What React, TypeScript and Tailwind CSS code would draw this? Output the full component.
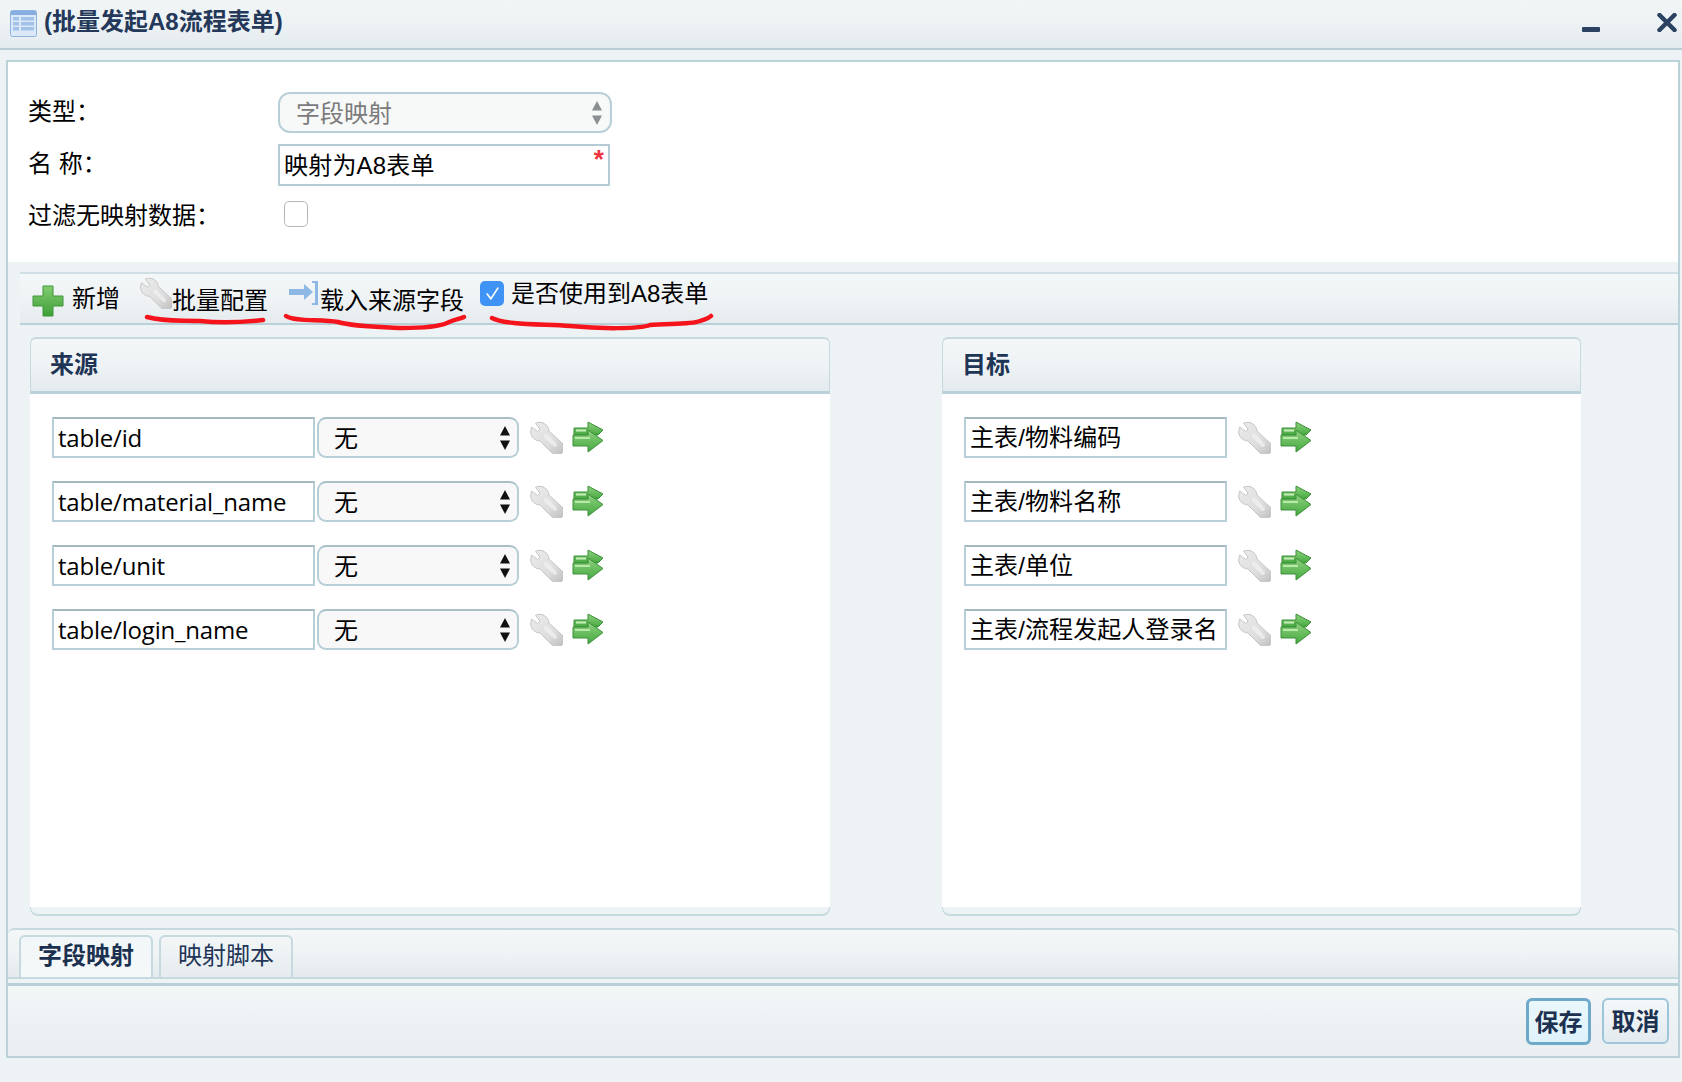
import React from "react";

const FONT = "[font-family:'Liberation_Sans','Noto_Sans_CJK_SC',sans-serif]";

function Wrench({ className = "" }: { className?: string }) {
  return (
    <svg viewBox="0 0 33 33" className={`blur-[0.5px] ${className}`}>
      <defs>
        <linearGradient id="wr" x1="0" y1="0" x2="1" y2="1">
          <stop offset="0" stopColor="#ebebeb" />
          <stop offset="0.6" stopColor="#dedede" />
          <stop offset="1" stopColor="#bdbdbd" />
        </linearGradient>
      </defs>
      <path
        d="M5.5 2.2 A9.5 9.5 0 0 1 19 10 L32 22 A7 7 0 0 1 22 32 L10 20 A9.5 9.5 0 0 1 1.8 6 L7.5 10.5 L10 8 Z"
        fill="url(#wr)"
        stroke="#c4c4c4"
        strokeWidth="1"
        strokeLinejoin="round"
      />
      <path d="M16 15 L25 24" stroke="#f2f2f2" strokeWidth="4" strokeLinecap="round" opacity=".7" />
    </svg>
  );
}

function ArrowPair({ className = "" }: { className?: string }) {
  return (
    <svg viewBox="0 0 32 32" className={`blur-[0.3px] ${className}`}>
      <defs>
        <linearGradient id="ag" x1="0" y1="0" x2="0" y2="1">
          <stop offset="0" stopColor="#8fd27e" />
          <stop offset="1" stopColor="#45a840" />
        </linearGradient>
      </defs>
      <path
        d="M2 7 H16 V1 L31 9 L26 14 H10 V14 H2 Z"
        fill="url(#ag)"
        stroke="#3d8f3a"
        strokeWidth="1"
        strokeLinejoin="round"
      />
      <path d="M4 9.5 H14" stroke="#c8eebc" strokeWidth="2" />
      <path
        d="M1 14 H16 V9 L31 19.5 L16 31 V25 H1 Z"
        fill="url(#ag)"
        stroke="#3d8f3a"
        strokeWidth="1"
        strokeLinejoin="round"
      />
      <path d="M3 17 H18" stroke="#b9e8ac" strokeWidth="2" />
    </svg>
  );
}

function SelectArrows({ tone }: { tone: string }) {
  return (
    <svg viewBox="0 0 10 24" className="h-[24px] w-[10px]" fill={tone}>
      <path d="M5 0 L10 9.5 H0 Z" />
      <path d="M5 24 L10 14.5 H0 Z" />
    </svg>
  );
}

function Row({ text, select }: { text: string; select: boolean }) {
  return (
    <div className="flex h-[41px] items-start">
      <div
        className={`flex h-[41px] w-[263px] items-center whitespace-nowrap border-2 border-[#b9cfd7] border-t-[#a3bac3] bg-white pl-[4px] text-[24px] leading-none text-black ${
          select ? "tracking-[-0.2px] [font-family:'Open_Sans','Noto_Sans_CJK_SC',sans-serif]" : "tracking-[0.1px]"
        }`}
      >
        {text}
      </div>
      {select && (
        <div className="ml-[2px] flex h-[41px] w-[202px] items-center justify-between rounded-[9px] border-2 border-[#b9cfd7] border-t-[#a9bfc8] bg-[#f8f8f8] pl-[15px] pr-[7px] text-[24px] leading-none text-black">
          <span className="pt-[2px]">无</span>
          <SelectArrows tone="#111111" />
        </div>
      )}
      <Wrench className="ml-[11px] mt-[4px] h-[33px] w-[33px]" />
      <ArrowPair className="ml-[9px] mt-[4px] h-[32px] w-[32px]" />
    </div>
  );
}

function Panel({
  title,
  width,
  rows,
  select,
}: {
  title: string;
  width: string;
  rows: string[];
  select: boolean;
}) {
  return (
    <section className={`flex flex-col ${width}`}>
      <header className="flex h-[57px] items-center rounded-t-[6px] border-x border-b-[3px] border-t-2 border-[#c5d9df] border-b-[#bad1d9] bg-gradient-to-b from-[#f3f7f7] via-[#eff3f5] to-[#e3eaed] pl-[19px] text-[24px] font-bold leading-none text-[#1f3556]">
        {title}
      </header>
      <div className="flex flex-1 flex-col gap-[23px] bg-white pl-[22px] pt-[23px]">
        {rows.map((r) => (
          <Row key={r} text={r} select={select} />
        ))}
      </div>
      <div className="h-[9px] rounded-b-[8px] border-x border-b-2 border-[#c5d9df] bg-[#edf2f5]" />
    </section>
  );
}

export default function App() {
  return (
    <div className={`relative flex h-[1082px] w-[1682px] flex-col overflow-hidden bg-[#edf2f5] ${FONT}`}>
      {/* title bar */}
      <div className="flex h-[50px] shrink-0 items-start border-b-2 border-[#b9cdd5] bg-gradient-to-b from-[#f1f5f6] via-[#edf2f4] to-[#e4ebee] pl-[10px]">
        <svg viewBox="0 0 27 27" className="mt-[10px] h-[27px] w-[27px]">
          <rect x="0.5" y="0.5" width="26" height="26" rx="2" fill="#dbe8f7" stroke="#8fb2de" />
          <rect x="1" y="1" width="25" height="4" fill="#86aee0" />
          <g fill="#a3c2ea">
            <rect x="3" y="7" width="6" height="3.5" />
            <rect x="11" y="7" width="13" height="3.5" />
            <rect x="3" y="12" width="6" height="3.5" />
            <rect x="11" y="12" width="13" height="3.5" />
            <rect x="3" y="17" width="6" height="3.5" />
            <rect x="11" y="17" width="13" height="3.5" />
          </g>
        </svg>
        <div className="ml-[7px] mt-[8px] text-[24px] font-bold leading-[28px] text-[#24385a]">(批量发起A8流程表单)</div>
        <div className="ml-auto mr-[5px] mt-[13px] flex items-start">
          <svg viewBox="0 0 18 5" className="mt-[14px] h-[5px] w-[18px]">
            <rect width="18" height="5" rx="1" fill="#2b4263" />
          </svg>
          <svg viewBox="0 0 20 19" className="ml-[57px] h-[19px] w-[20px]">
            <path d="M2.5 2 L17.5 17 M17.5 2 L2.5 17" stroke="#2b4263" strokeWidth="4.5" strokeLinecap="round" />
          </svg>
        </div>
      </div>

      {/* main window */}
      <div className="ml-[6px] mr-[2px] mt-[10px] flex flex-1 flex-col border-x-2 border-[#bcd2d9]">
        {/* form */}
        <div className="h-[202px] shrink-0 border-t-2 border-[#bcd2d9] bg-white pl-[20px] pt-[30px] text-[24px] leading-none text-black">
          <div className="flex h-[41px] items-center">
            <div className="mt-[-2px] w-[250px]">类型：</div>
            <div className="flex h-[41px] w-[334px] items-center justify-between rounded-[12px] border-2 border-[#b9cfd7] bg-[#f7f8f8] pl-[16px] pr-[8px] text-[#7b7b7b]">
              <span className="pt-[2px]">字段映射</span>
              <SelectArrows tone="#8a8f92" />
            </div>
          </div>
          <div className="mt-[11px] flex h-[42px] items-center">
            <div className="mt-[-2px] w-[250px]">名 称：</div>
            <div className="relative flex h-[42px] w-[332px] items-center border-2 border-[#b5cbd3] bg-white pl-[4px] pt-[2px] tracking-[0.2px]">
              映射为A8表单
              <span className="absolute right-[4px] top-[0px] text-[26px] font-bold leading-[26px] text-[#f0323f]">*</span>
            </div>
          </div>
          <div className="mt-[15px] flex h-[26px] items-center">
            <div className="mt-[4px] w-[256px] whitespace-nowrap">过滤无映射数据：</div>
            <div className="h-[26px] w-[24px] rounded-[5px] border border-[#b7b7b7] bg-white" />
          </div>
        </div>

        {/* toolbar */}
        <div className="ml-[12px] mt-[10px] flex h-[53px] shrink-0 items-start border-y-2 border-[#cfdfe4] border-b-[#b9d0d8] bg-gradient-to-b from-[#f4f7f8] via-[#eff3f5] to-[#e5ebee] text-[24px] leading-none text-black">
          <svg viewBox="0 0 32 32" className="ml-[12px] mt-[11px] h-[32px] w-[32px] blur-[0.3px]">
            <defs>
              <linearGradient id="pl" x1="0" y1="0" x2="0" y2="1">
                <stop offset="0" stopColor="#84cc70" />
                <stop offset="1" stopColor="#3e9f38" />
              </linearGradient>
            </defs>
            <path
              d="M11 1 H21 V11 H31 V21 H21 V31 H11 V21 H1 V11 H11 Z"
              fill="url(#pl)"
              stroke="#3f963a"
              strokeWidth="1"
              strokeLinejoin="round"
            />
          </svg>
          <span className="ml-[8px] mt-[13px]">新增</span>
          <Wrench className="ml-[20px] mt-[3px] h-[32px] w-[32px]" />
          <span className="ml-0 mt-[15px] whitespace-nowrap">批量配置</span>
          <svg viewBox="0 0 30 26" className="ml-[21px] mt-[6px] h-[26px] w-[30px] blur-[0.3px]">
            <path d="M0 9 H15 V4 L24 12 L15 20 V15 H0 Z" fill="#8db8e6" />
            <path d="M23 1 H29 V25 H23 V23 H26 V3 H23 Z" fill="#8db8e6" />
          </svg>
          <span className="ml-[1px] mt-[15px] whitespace-nowrap">载入来源字段</span>
          <div className="ml-[16px] mt-[7px] flex h-[25px] w-[24px] items-center justify-center rounded-[5px] bg-[#3f93f5]">
            <svg viewBox="0 0 14 14" className="h-[15px] w-[15px]">
              <path d="M2 7.5 L5.5 12 L12 2" fill="none" stroke="#fff" strokeWidth="1.6" strokeLinecap="round" />
            </svg>
          </div>
          <span className="ml-[7px] mt-[8px] whitespace-nowrap">是否使用到A8表单</span>
        </div>

        {/* panels */}
        <div className="ml-[22px] mt-[12px] flex h-[579px] shrink-0 gap-[112px]">
          <Panel
            title="来源"
            width="w-[800px]"
            select
            rows={["table/id", "table/material_name", "table/unit", "table/login_name"]}
          />
          <Panel
            title="目标"
            width="w-[639px]"
            select={false}
            rows={["主表/物料编码", "主表/物料名称", "主表/单位", "主表/流程发起人登录名"]}
          />
        </div>

        {/* tab strip */}
        <div className="mt-[12px] flex h-[49px] shrink-0 items-end rounded-t-[6px] border-t-2 border-[#c5d9df] bg-gradient-to-b from-[#f3f7f7] via-[#eff3f5] to-[#e4eaed] pl-[11px] text-[24px] leading-none">
          <div className="flex h-[42px] w-[134px] items-center justify-center rounded-t-[6px] border-x-2 border-t-2 border-[#c5d9df] bg-gradient-to-b from-[#f1f6f8] to-[#f5f8f9] pb-[2px] font-bold text-[#1c3050]">
            字段映射
          </div>
          <div className="ml-[6px] flex h-[42px] w-[134px] items-center justify-center rounded-t-[6px] border-x-2 border-t-2 border-[#c5d9df] bg-gradient-to-b from-[#f2f6f7] to-[#e6ecef] pb-[2px] text-[#1f3556]">
            映射脚本
          </div>
        </div>
        <div className="h-[6px] shrink-0 border-t-2 border-[#c5d9df] bg-[#eef3f5]" />
        <div className="h-[3px] shrink-0 bg-[#b9d0d8]" />

        {/* footer */}
        <div className="flex h-[72px] shrink-0 items-start justify-end gap-[11px] border-b-2 border-[#b9d0d8] bg-gradient-to-b from-[#f3f7f8] via-[#edf1f4] to-[#e9eef1] pr-[9px] pt-[12px] text-[24px] font-bold leading-none text-[#1c3050]">
          <div className="flex h-[47px] w-[65px] items-center justify-center rounded-[6px] border-[3px] border-[#6fa9c9] bg-gradient-to-b from-[#eaf7fc] to-[#def2fb] pt-[2px]">
            保存
          </div>
          <div className="flex h-[46px] w-[67px] items-center justify-center rounded-[6px] border-2 border-[#9ec6da] bg-gradient-to-b from-[#f3f7f9] to-[#e3ebef] pt-[2px]">
            取消
          </div>
        </div>
      </div>
      <div className="h-[24px] shrink-0" />

      {/* red marker annotations drawn over the toolbar */}
      <svg className="pointer-events-none absolute left-0 top-0 h-[1082px] w-[1682px]" viewBox="0 0 1682 1082" fill="none">
        <g stroke="#f5141c" strokeWidth="4.5" strokeLinecap="round" strokeLinejoin="round">
          <path d="M147 317 C165 322 180 320 200 321 C220 323 245 322 263 320" />
          <path d="M286 316 C295 322 320 319 338 322 C355 327 385 327 402 328 C425 328 440 326 447 323 C455 319 460 319 464 317" />
          <path d="M492 318 C505 325 540 324 570 326 C600 329 640 329 650 325 C665 323 690 325 700 321 C705 319 708 319 711 316" />
        </g>
      </svg>
    </div>
  );
}
